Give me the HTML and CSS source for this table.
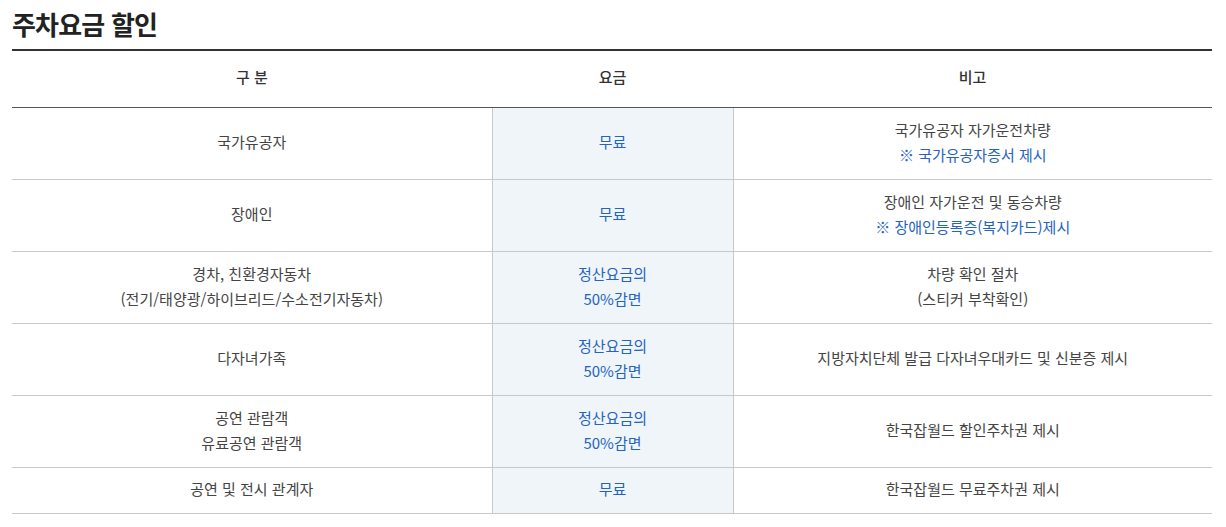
FILE: index.html
```html
<!DOCTYPE html>
<html lang="ko">
<head>
<meta charset="utf-8">
<title>주차요금 할인</title>
<link rel="stylesheet" href="styles.css">
</head>
<body>
<section class="wrap">
  <h2 class="title">주차요금 할인</h2>
  <table class="fee">
    <colgroup>
      <col class="c1"><col class="c2"><col class="c3">
    </colgroup>
    <thead>
      <tr><th>구 분</th><th>요금</th><th>비고</th></tr>
    </thead>
    <tbody>
      <tr class="r2">
        <td>국가유공자</td>
        <td class="price">무료</td>
        <td>국가유공자 자가운전차량<br><span class="blue">※ 국가유공자증서 제시</span></td>
      </tr>
      <tr class="r2">
        <td>장애인</td>
        <td class="price">무료</td>
        <td>장애인 자가운전 및 동승차량<br><span class="blue">※ 장애인등록증(복지카드)제시</span></td>
      </tr>
      <tr class="r2">
        <td>경차, 친환경자동차<br>(전기/태양광/하이브리드/수소전기자동차)</td>
        <td class="price">정산요금의<br>50%감면</td>
        <td>차량 확인 절차<br>(스티커 부착확인)</td>
      </tr>
      <tr class="r2">
        <td>다자녀가족</td>
        <td class="price">정산요금의<br>50%감면</td>
        <td>지방자치단체 발급 다자녀우대카드 및 신분증 제시</td>
      </tr>
      <tr class="r2">
        <td>공연 관람객<br>유료공연 관람객</td>
        <td class="price">정산요금의<br>50%감면</td>
        <td>한국잡월드 할인주차권 제시</td>
      </tr>
      <tr class="r1">
        <td>공연 및 전시 관계자</td>
        <td class="price">무료</td>
        <td>한국잡월드 무료주차권 제시</td>
      </tr>
    </tbody>
  </table>
</section>
</body>
</html>
```
FILE: styles.css
```css
* { box-sizing: border-box; }
html, body { margin: 0; padding: 0; background: #fff; }
body {
  font-family: "Noto Sans CJK KR", "Noto Sans", sans-serif;
  color: #333;
}
.wrap { padding: 0 14px 0 12px; }
.title {
  margin: 0;
  padding-top: 5px;
  height: 49px;
  font-size: 26px;
  font-weight: 700;
  line-height: 38px;
  color: #222;
  letter-spacing: -0.8px;
}
.fee {
  width: 1200px;
  border-collapse: collapse;
  table-layout: fixed;
  border-top: 2px solid #333;
  font-size: 15px;
}
.c1 { width: 480px; }
.c2 { width: 241px; }
.c3 { width: 479px; }
.fee th {
  height: 57px;
  font-weight: 500;
  font-size: 15px;
  color: #333;
  border-bottom: 1px solid #555;
  padding: 0 0 5px;
  text-align: center;
  vertical-align: middle;
}
.fee td {
  padding: 0 0 3px;
  text-align: center;
  vertical-align: middle;
  line-height: 25px;
  border-bottom: 1px solid #c8c8c8;
  color: #444;
}
.r2 td { height: 72px; }
.r1 td { height: 46px; }
.fee td.price {
  background: #f0f5fa;
  color: #2563c0;
  border-left: 1px solid #c8c8c8;
  border-right: 1px solid #c8c8c8;
}
.blue { color: #2563c0; }
```
